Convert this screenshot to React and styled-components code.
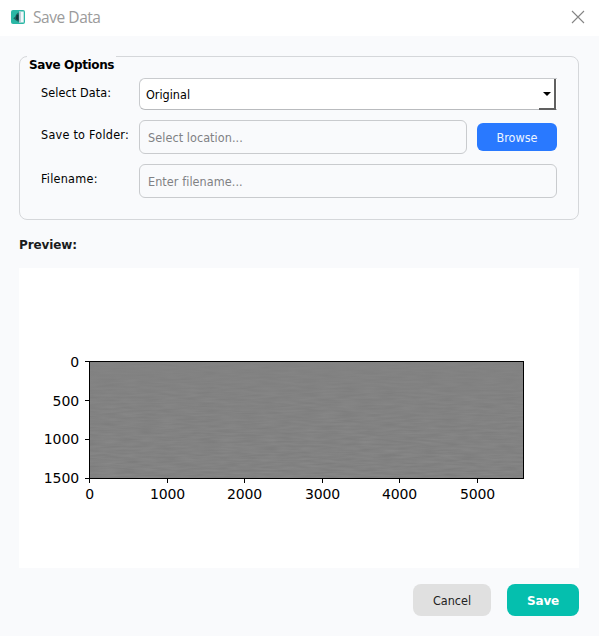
import React from "react";
import styled, { createGlobalStyle } from "styled-components";

const GlobalStyle = createGlobalStyle`
  * { box-sizing: border-box; }
  body { margin: 0; background: #f9fafc; }
  button, input { font: inherit; letter-spacing: inherit; }
`;

const Dialog = styled.div`
  width: 599px;
  height: 636px;
  display: flex;
  flex-direction: column;
  overflow: hidden;
  background: #f9fafc;
  color: #000;
  font: 12.5px/16px "DejaVu Sans Condensed", "DejaVu Sans", sans-serif;
  font-stretch: condensed;
`;

const TitleBar = styled.header`
  height: 36px;
  flex: none;
  display: flex;
  align-items: center;
  padding: 0 14px 2px 10px;
  background: #fff;
`;

const Title = styled.h1`
  margin: 0 auto 0 7px;
  font: 400 15.5px/20px "Open Sans", "Noto Sans", sans-serif;
  font-stretch: normal;
  letter-spacing: -0.45px;
  color: #9b9b9b;
`;

const CloseButton = styled.button`
  display: flex;
  padding: 0;
  border: 0;
  background: none;
`;

const Content = styled.main`
  display: flex;
  flex-direction: column;
  padding: 20px 20px 0 19px;
`;

const Group = styled.fieldset`
  margin: 0;
  min-width: 0;
  width: 560px;
  height: 164px;
  padding: 0 21px;
  border: 1px solid #d5d7da;
  border-radius: 8px;
`;

const Legend = styled.legend`
  height: 18px;
  margin: -1px 0 0 -14px;
  padding: 1px 2px 0;
  font: 700 12px/17px "DejaVu Sans", sans-serif;
  font-stretch: normal;
  letter-spacing: -0.36px;
  float: left;
  background: #f9fafc;
`;

const Form = styled.div`
  clear: both;
  display: grid;
  grid-template-columns: 98px 418px;
  grid-template-rows: 32px 34px 34px;
  row-gap: 10px;
  padding-top: 4px;
`;

const Label = styled.label`
  padding-top: 7px;
  white-space: nowrap;
  letter-spacing: ${(p) => p.$spacing}px;
`;

const FieldRow = styled.div`
  display: flex;
  align-items: center;
  gap: 10px;
`;

const Input = styled.input`
  flex: 1;
  min-width: 0;
  height: 34px;
  padding: 0 8px;
  border: 1px solid #c9cbce;
  border-radius: 6px;
  background: #f9fafc;
  letter-spacing: 0.07px;
  outline: none;
  &::placeholder { color: #808184; opacity: 1; }
`;

const Select = styled.div`
  height: 32px;
  display: flex;
  align-items: center;
  justify-content: space-between;
  padding-left: 6px;
  border: 1px solid #c9cbce;
  border-right: 0;
  border-bottom-color: #b9bbbe;
  border-radius: 6px 0 0 6px;
  background: #fff;
  letter-spacing: 0;
`;

const Value = styled.span`
  padding-top: 2px;
`;

const DropButton = styled.span`
  width: 17px;
  height: 31px;
  display: flex;
  align-items: center;
  justify-content: center;
  margin-right: 1px;
  padding-top: 2px;
  border-right: 2px solid #606060;
  border-bottom: 2px solid #606060;
`;

const Button = styled.button`
  width: ${(p) => p.$width}px;
  height: ${(p) => p.$height}px;
  flex: none;
  padding: 1px 0 0;
  border: 0;
  border-radius: ${(p) => p.$radius}px;
  background: ${(p) => p.$background};
  color: ${(p) => p.$color};
  letter-spacing: 0;
`;

const PrimaryButton = styled(Button)`
  font: 700 12px/16px "DejaVu Sans", sans-serif;
  font-stretch: normal;
  letter-spacing: -0.2px;
`;

const PreviewTitle = styled.h2`
  margin: 17px 0 14px;
  font: 700 12px/17px "DejaVu Sans", sans-serif;
  font-stretch: normal;
  color: #1b1c1d;
  letter-spacing: -0.1px;
`;

const Preview = styled.section`
  width: 560px;
  height: 300px;
  background: #fff;
`;

const Chart = styled.svg`
  display: block;
  font: 14px "DejaVu Sans", sans-serif;
  font-stretch: normal;
`;

const Actions = styled.footer`
  display: flex;
  justify-content: flex-end;
  gap: 16px;
  padding-top: 16px;
`;

const xTicks = [0, 1000, 2000, 3000, 4000, 5000];
const yTicks = [0, 500, 1000, 1500];

function AppIcon() {
  return (
    <svg width="16" height="16" viewBox="0 0 16 16">
      <rect x="1" y="1" width="14" height="14" rx="2" fill="#2bb7a5" />
      <path d="M9 2.5h4.7v11H9z" fill="#f1f7f9" />
      <path d="M9 2.5h1.8v11H9z" fill="#b3c3d0" />
      <path d="M7.5 4l1.2-.5v9.5L6 11.5 3.2 9.2l2-1.4.8-2z" fill="#1d6661" />
      <path d="M6.5 6l2-.5v6L6 10z" fill="#14323a" />
    </svg>
  );
}

function PreviewChart() {
  return (
    <Chart width="560" height="300" viewBox="0 0 560 300">
      <defs>
        <filter id="traces" x="0" y="0" width="100%" height="100%" colorInterpolationFilters="sRGB">
          <feTurbulence type="fractalNoise" baseFrequency="0.05 0.45" numOctaves="2" seed="8" />
          <feColorMatrix values="0.13 0 0 0 0.443  0.13 0 0 0 0.443  0.13 0 0 0 0.443  0 0 0 0 1" />
        </filter>
        <linearGradient id="calm" x1="0" y1="0" x2="0" y2="1">
          <stop offset="0" stopColor="#828282" stopOpacity="0.85" />
          <stop offset="0.3" stopColor="#828282" stopOpacity="0.65" />
          <stop offset="1" stopColor="#828282" stopOpacity="0.5" />
        </linearGradient>
      </defs>
      <rect x="71" y="94" width="433" height="116" filter="url(#traces)" />
      <rect x="71" y="94" width="433" height="116" fill="url(#calm)" />
      <rect x="70.5" y="93.5" width="434" height="117" fill="none" stroke="#000" />
      {xTicks.map((value, i) => {
        const x = Math.round(70 + i * 77.6) + 0.5;
        return (
          <g key={value}>
            <path d={`M${x} 211v4`} stroke="#000" />
            <text x={x} y="231" textAnchor="middle" letterSpacing="-0.2">{value}</text>
          </g>
        );
      })}
      {yTicks.map((value, i) => {
        const y = 93.5 + i * 39;
        return (
          <g key={value}>
            <path d={`M66 ${y}h4`} stroke="#000" />
            <text x="60" y={i < 2 ? y + 5.5 : y + 4.5} textAnchor="end" letterSpacing="-0.1">{value}</text>
          </g>
        );
      })}
    </Chart>
  );
}

export default function App() {
  return (
    <Dialog>
      <GlobalStyle />
      <TitleBar>
        <AppIcon />
        <Title>Save Data</Title>
        <CloseButton aria-label="Close">
          <svg width="14" height="14" viewBox="0 0 14 14">
            <path d="M1 1l12 12M13 1L1 13" stroke="#858585" strokeWidth="1.1" />
          </svg>
        </CloseButton>
      </TitleBar>
      <Content>
        <Group>
          <Legend>Save Options</Legend>
          <Form>
            <Label $spacing={0.1}>Select Data:</Label>
            <Select>
              <Value>Original</Value>
              <DropButton>
                <svg width="8" height="4" viewBox="0 0 8 4"><path d="M0 0h8L4 4z" /></svg>
              </DropButton>
            </Select>
            <Label $spacing={0.25} htmlFor="folder">Save to Folder:</Label>
            <FieldRow>
              <Input id="folder" placeholder="Select location..." />
              <Button $width={80} $height={28} $radius={6} $background="#2979ff" $color="#eef5ff">Browse</Button>
            </FieldRow>
            <Label $spacing={0.25} htmlFor="filename">Filename:</Label>
            <FieldRow>
              <Input id="filename" placeholder="Enter filename..." />
            </FieldRow>
          </Form>
        </Group>
        <PreviewTitle>Preview:</PreviewTitle>
        <Preview><PreviewChart /></Preview>
        <Actions>
          <Button $width={78} $height={32} $radius={8} $background="#e0e0e0" $color="#222">Cancel</Button>
          <PrimaryButton $width={72} $height={32} $radius={8} $background="#05bfae" $color="#fff">Save</PrimaryButton>
        </Actions>
      </Content>
    </Dialog>
  );
}
